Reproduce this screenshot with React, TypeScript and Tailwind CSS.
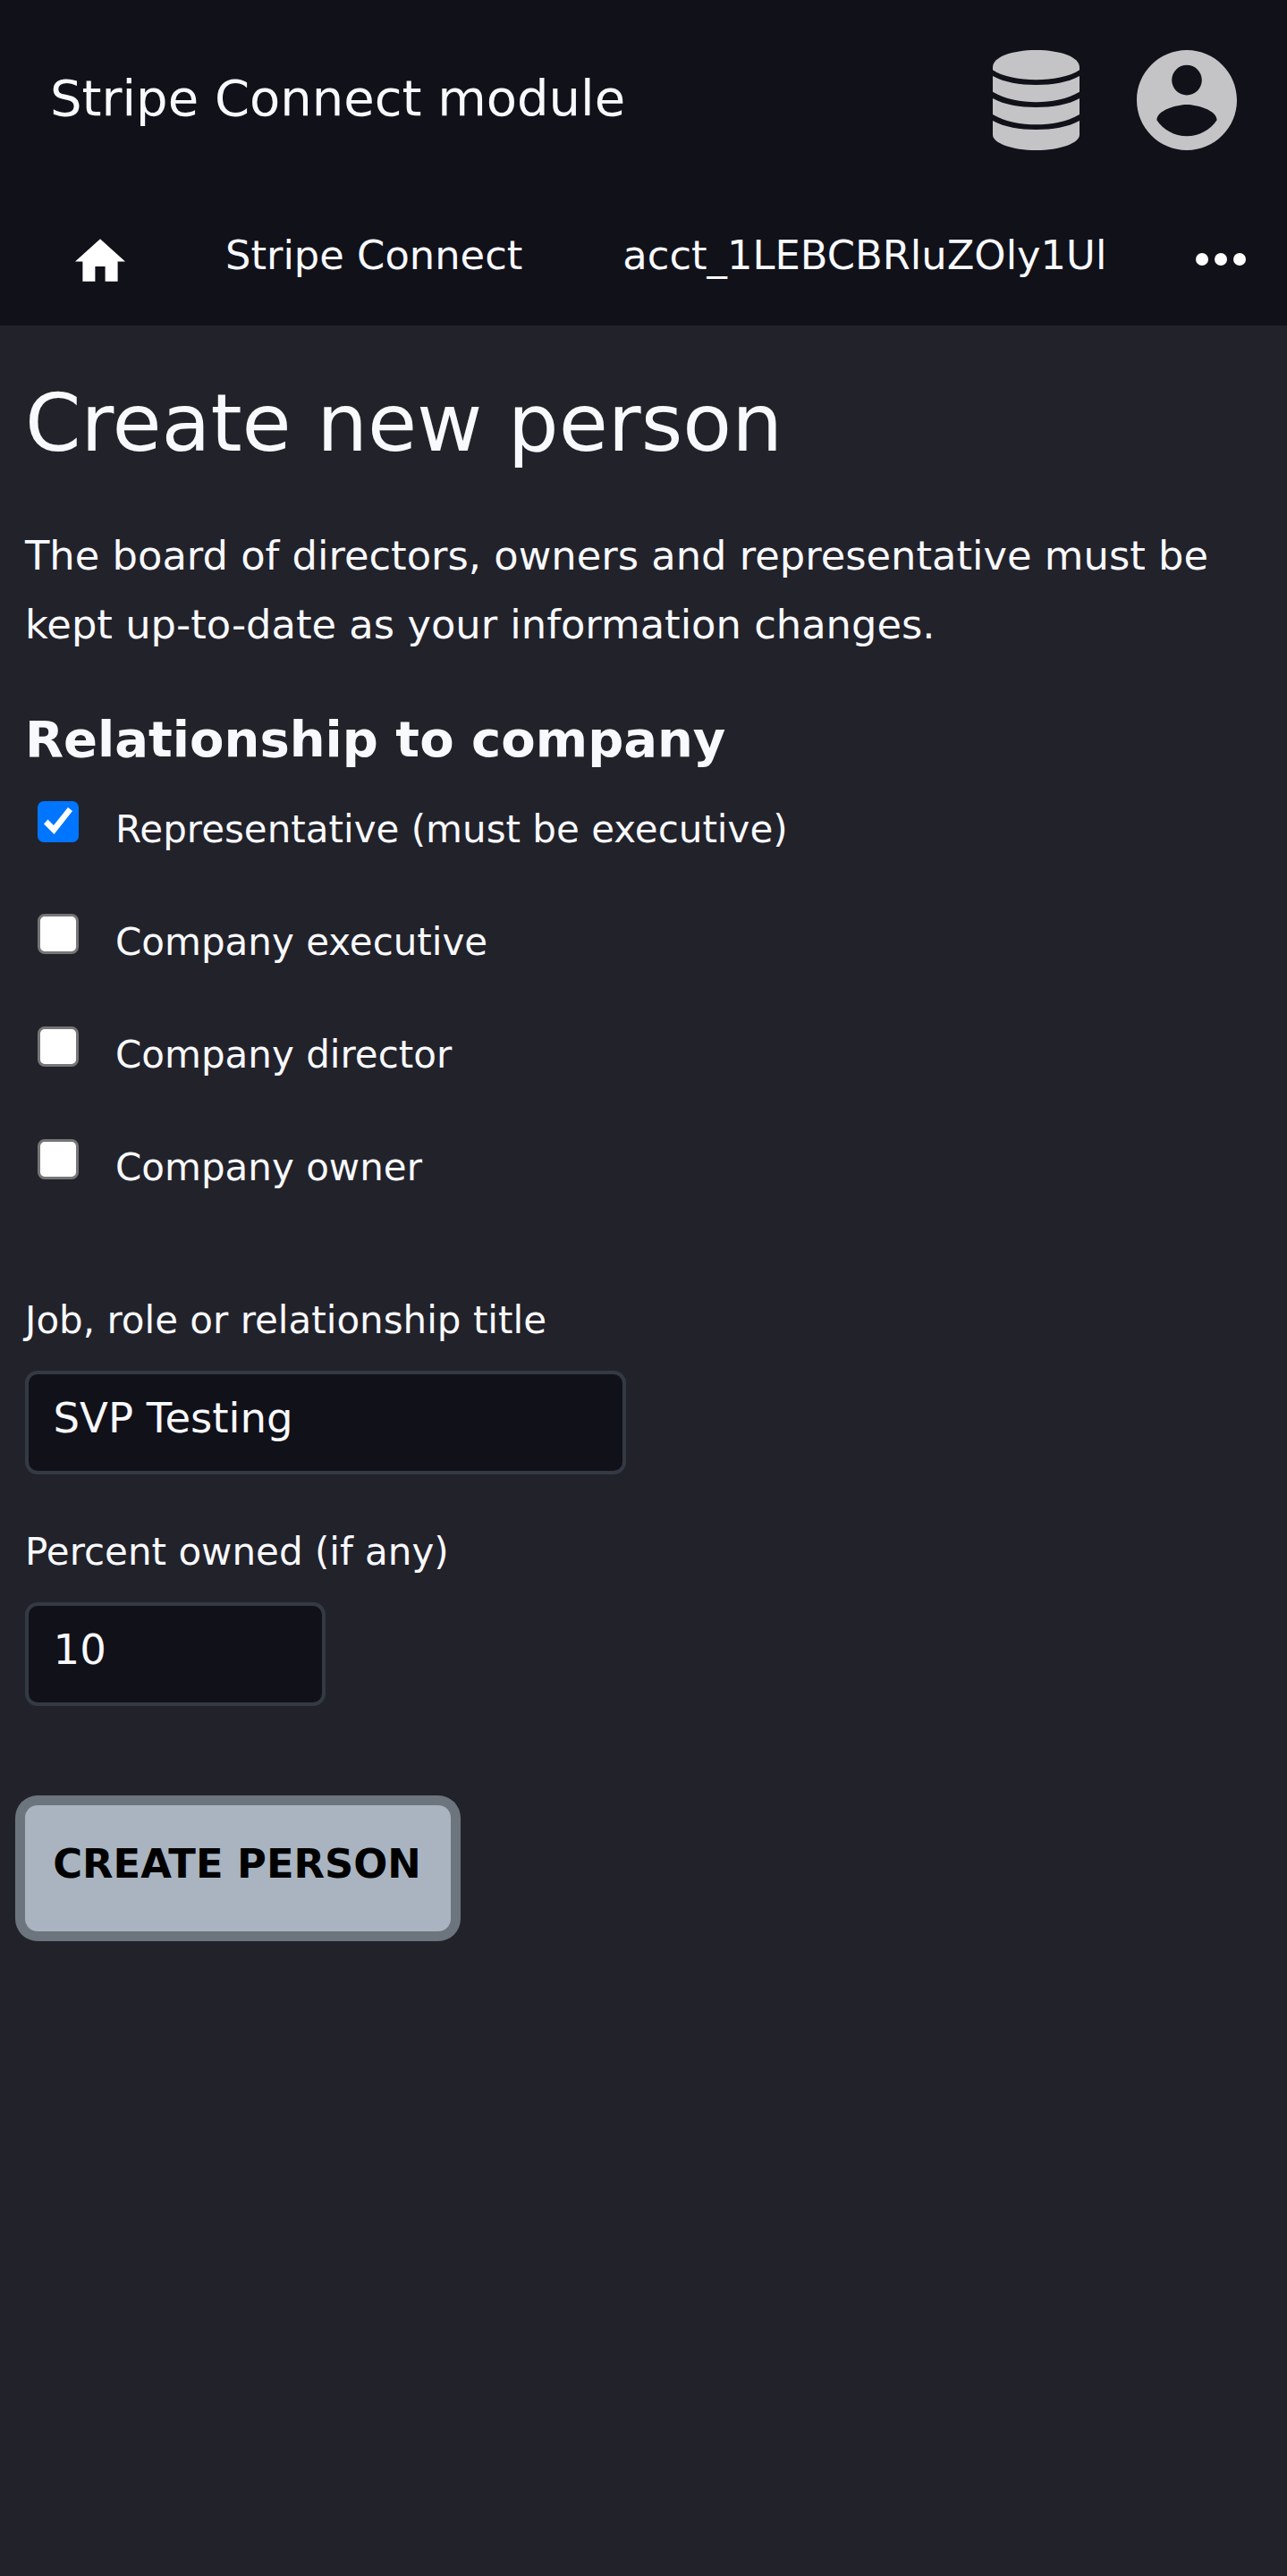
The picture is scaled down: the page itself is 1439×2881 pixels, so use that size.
import React from "react";

function DatabaseIcon() {
  return (
    <svg className="block h-[112px] w-[97px]" viewBox="150 107 291 337" preserveAspectRatio="none" fill="#c4c4c6">
      <path d="M150 165C150 130 215 107 295.500 107S441 130 441 165V174C407 197 350 207 295.500 207S184 197 150 174Z" />
      <path d="M150 194C190 216 240 224 295.500 224S401 216 441 194V248C401 273 345 282 295.500 282S190 273 150 248Z" />
      <path d="M150 269.500C190 291.500 240 299.500 295.500 299.500S401 291.500 441 269.500V323.500C401 348.500 345 357.500 295.500 357.500S190 348.500 150 323.500Z" />
      <path d="M150 345C190 367 240 375 295.500 375S401 367 441 345V392C441 420 375 444 295.500 444S150 420 150 392Z" />
    </svg>
  );
}

function AccountIcon() {
  return (
    <svg className="block h-[112px] w-[112px]" viewBox="2 2 20 20" fill="#c4c4c6">
      <path d="M12 2C6.480 2 2 6.480 2 12s4.480 10 10 10 10-4.480 10-10S17.520 2 12 2zm0 3c1.660 0 3 1.340 3 3s-1.340 3-3 3-3-1.340-3-3 1.340-3 3-3zm0 14.200c-2.500 0-4.710-1.280-6-3.220.03-1.990 4-3.080 6-3.080 1.990 0 5.970 1.090 6 3.080-1.290 1.940-3.500 3.220-6 3.220z" />
    </svg>
  );
}

function CheckOption({ label, checked = false }: { label: string; checked?: boolean }) {
  return (
    <label className="flex h-[126px] items-start pl-[14px] text-[42px] leading-[63px]">
      {checked ? (
        <span className="mr-[41px] block h-[46px] w-[46px] rounded-[7px] bg-[#0075ff]">
          <svg className="block h-full w-full" viewBox="0 0 46 46" fill="#fff">
            <path d="M7 25.500L11.500 20.500L18 27L34 7L39 11L18.500 37Z" />
          </svg>
        </span>
      ) : (
        <span className="mr-[41px] block h-[45px] w-[46px] rounded-[8px] border-[3px] border-[#767676] bg-white" />
      )}
      <span>{label}</span>
    </label>
  );
}

function Field({ label, value, className }: { label: string; value: string; className: string }) {
  return (
    <div>
      <label className="block text-[42px] leading-[63px]">{label}</label>
      <input
        className={
          "mt-[25px] block h-[116px] rounded-[14px] border-[4px] border-[#343a43] bg-[#11111a] pb-[10px] pl-[27.500px] text-[46.600px] text-[#f8f9fc] outline-none " +
          className
        }
        defaultValue={value}
      />
    </div>
  );
}

export default function App() {
  return (
    <div className="min-h-[2881px] w-full bg-[#22222b] font-['DejaVu_Sans',sans-serif] text-[#f8f9fc]">
      <header className="bg-[#11111a]">
        <div className="flex h-[224px] items-center justify-between px-[56px]">
          <div className="pb-[5px] text-[56px] leading-[84px]">Stripe Connect module</div>
          <div className="flex items-center gap-[64px]">
            <DatabaseIcon />
            <AccountIcon />
          </div>
        </div>
        <nav className="flex h-[140px] items-start pl-[84px] pr-[46px] text-[44.8px] leading-[77px] whitespace-nowrap">
          <svg className="mt-[43px] h-[48px] w-[56px] shrink-0" viewBox="2 3 20 17" fill="#fff">
            <path d="M10 20v-6h4v6h5v-8h3L12 3 2 12h3v8z" />
          </svg>
          <a className="ml-[112px] pt-[23px]">Stripe Connect</a>
          <a className="ml-[112px] pt-[23px]">acct_1LEBCBRluZOly1Ul</a>
          <svg className="mt-[59px] ml-auto h-[14px] w-[56px] shrink-0" viewBox="4 10 16 4" fill="#fff">
            <circle cx="6" cy="12" r="2" />
            <circle cx="12" cy="12" r="2" />
            <circle cx="18" cy="12" r="2" />
          </svg>
        </nav>
      </header>
      <main className="px-[28px] pt-[53px]">
        <h1 className="text-[89.6px] leading-[112px]">Create new person</h1>
        <p className="mt-[54px] text-[44.8px] leading-[77px]">
          The board of directors, owners and representative must be kept up-to-date as your information changes.
        </p>
        <h2 className="mt-[48px] mb-[27px] text-[56px] leading-[84px] font-bold">Relationship to company</h2>
        <CheckOption label="Representative (must be executive)" checked />
        <CheckOption label="Company executive" />
        <CheckOption label="Company director" />
        <CheckOption label="Company owner" />
        <div className="mt-[45px] flex flex-col gap-[55px]">
          <Field label="Job, role or relationship title" value="SVP Testing" className="w-[672px]" />
          <Field label="Percent owned (if any)" value="10" className="w-[336px]" />
        </div>
        <button className="mt-[111px] flex h-[141px] w-[476px] items-center justify-center rounded-[14px] bg-[#a9b4c0] pr-[2px] pb-[10px] text-[44.8px] font-bold whitespace-nowrap text-black ring-[11px] ring-[#6c757d]">
          CREATE PERSON
        </button>
      </main>
    </div>
  );
}
